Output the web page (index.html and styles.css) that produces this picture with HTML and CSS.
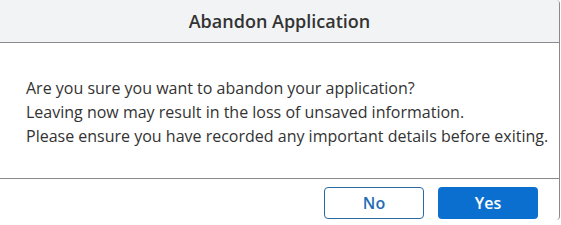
FILE: index.html
```html
<!DOCTYPE html>
<html lang="en">
<head>
    <meta charset="UTF-8">
    <meta name="viewport" content="width=device-width, initial-scale=1.0">
    <title>Abandon Application</title>
    <link rel="stylesheet" href="styles.css">
</head>
<body>
    <div class="dialog">
        <header class="dialog-header">
            <h2>Abandon Application</h2>
        </header>
        <section class="dialog-body">
            <p>Are you sure you want to abandon your application?</p>
            <p>Leaving now may result in the loss of unsaved information.</p>
            <p>Please ensure you have recorded any important details before exiting.</p>
        </section>
        <footer class="dialog-footer">
            <button class="btn btn-secondary">No</button>
            <button class="btn btn-primary">Yes</button>
        </footer>
    </div>
</body>
</html>
```

FILE: styles.css
```css
body {
    font-family: "Open Sans", Arial, sans-serif;
    margin: 0;
    padding: 0;
    background-color: white;
    color: #333;
}
.dialog {
    width: 559px;
    height: 220px;
    border-right: 1px solid #8a8a8a;
    border-radius: 0 4px 4px 0;
    background-color: white;
    overflow: hidden;
}
.dialog-header {
    height: 42px;
    background-color: #f2f3f5;
    border-bottom: 1px solid #8a8a8a;
    display: flex;
    align-items: center;
    justify-content: center;
}
.dialog-header h2 {
    margin: 0;
    font-size: 18px;
    font-weight: 600;
    color: #333;
}
.dialog-body {
    height: 136px;
    padding: 33px 0 0 26px;
    border-bottom: 1px solid #8a8a8a;
    box-sizing: border-box;
}
.dialog-body p {
    margin: 0;
    font-size: 16px;
    line-height: 24px;
}
.dialog-footer {
    display: flex;
    justify-content: flex-end;
    gap: 14px;
    padding: 8px 21px 0 0;
}
.btn {
    width: 100px;
    height: 32px;
    border-radius: 4px;
    font-family: "Open Sans", Arial, sans-serif;
    font-size: 16px;
    font-weight: 600;
    cursor: pointer;
}
.btn-secondary {
    background-color: white;
    color: #1f6db5;
    border: 1px solid #2a6a9e;
}
.btn-primary {
    background-color: #0b6fd0;
    color: white;
    border: none;
}
```
